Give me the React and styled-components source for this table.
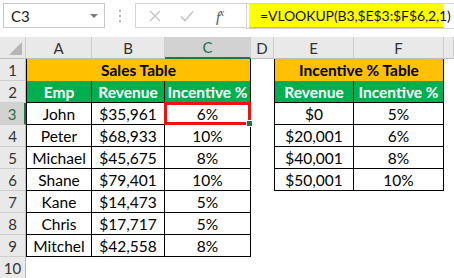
import React from "react";
import styled, { createGlobalStyle, css } from "styled-components";

const GlobalStyle = createGlobalStyle`
  * { box-sizing: border-box; }
  body {
    margin: 0;
    background: #fff;
    font-family: Lato, "Open Sans", "Liberation Sans", sans-serif;
  }
`;

const Sheet = styled.div`
  width: 454px;
  height: 278px;
  overflow: hidden;
  background: #fff;
`;

const FormulaBar = styled.div`
  height: 37px;
  display: flex;
  align-items: flex-start;
  padding: 3px 0 0 3px;
`;

const NameBox = styled.div`
  width: 102px;
  height: 25px;
  border: 1px solid #c6c6c6;
  display: flex;
  align-items: center;
  justify-content: space-between;
  padding: 0 6px 0 7px;
  font-size: 15px;
  color: #222;
`;

const Caret = styled.span`
  width: 0;
  height: 0;
  border-left: 4px solid transparent;
  border-right: 4px solid transparent;
  border-top: 4px solid #7a7a7a;
`;

const Dots = styled.div`
  width: 30px;
  height: 25px;
  display: flex;
  flex-direction: column;
  align-items: center;
  justify-content: center;
  gap: 3px;
  span {
    width: 2px;
    height: 2px;
    background: #b0b0b0;
  }
`;

const IconBox = styled.div`
  width: 111px;
  height: 25px;
  border: 1px solid #d4d4d4;
  border-right: none;
  display: flex;
  align-items: center;
  padding-left: 12px;
  gap: 17px;
`;

const Fx = styled.span`
  font-family: "Liberation Serif", serif;
  font-style: italic;
  font-size: 15px;
  color: #555;
  margin-left: 4px;
  letter-spacing: -1px;
  sup {
    font-size: 11px;
  }
`;

const FormulaBox = styled.div`
  flex: 1;
  height: 26px;
  border: 1px solid #d4d4d4;
  border-right: none;
  padding: 0 0 0 2px;
  display: flex;
`;

const Highlight = styled.div`
  width: 195px;
  background: #ffff00;
  border-bottom: 1px solid #c9c92a;
  display: flex;
  align-items: center;
  padding-left: 11px;
  font-size: 14px;
  letter-spacing: -0.1px;
  color: #111;
  white-space: nowrap;
`;

const Grid = styled.div`
  display: grid;
  grid-template-columns: 26px 66px 73px 86px 23px 80px 90px 10px;
  grid-auto-rows: 22px;
`;

const ColHead = styled.div`
  background: ${(p) => (p.$active ? "#d2d2d2" : "#e9e9e9")};
  border-right: 1px solid #cdcdcd;
  border-bottom: ${(p) => (p.$active ? "2px solid #217346" : "1px solid #bdbdbd")};
  display: flex;
  align-items: center;
  justify-content: center;
  font-size: 15px;
  color: ${(p) => (p.$active ? "#217346" : "#333")};
`;

const Corner = styled(ColHead)`
  position: relative;
  &::after {
    content: "";
    position: absolute;
    right: 3px;
    bottom: 3px;
    border-left: 13px solid transparent;
    border-bottom: 13px solid #b5b5b5;
  }
`;

const RowHead = styled.div`
  background: ${(p) => (p.$active ? "#d2d2d2" : "#e9e9e9")};
  border-bottom: 1px solid #cdcdcd;
  border-right: ${(p) => (p.$active ? "2px solid #217346" : "1px solid #bdbdbd")};
  display: flex;
  align-items: center;
  justify-content: center;
  font-size: 15px;
  color: ${(p) => (p.$active ? "#217346" : "#333")};
`;

const fills = {
  title: "#ffc000",
  head: "#00b050",
  data: "#fff",
  blank: "#fff",
};

const Cell = styled.div`
  position: relative;
  grid-column: ${(p) => p.$span || "auto"};
  background: ${(p) => fills[p.$kind]};
  display: flex;
  align-items: center;
  justify-content: center;
  font-size: 15.5px;
  white-space: nowrap;
  color: ${(p) => (p.$kind === "head" ? "#fff" : "#000")};
  font-weight: ${(p) => (p.$kind === "title" || p.$kind === "head" ? 700 : 400)};
  ${(p) =>
    p.$kind !== "blank" &&
    css`
      border-right: 1px solid #000;
      border-bottom: ${p.$kind === "title" ? "none" : "1px solid #000"};
      ${p.$first && "border-left: 1px solid #000;"}
    `}
  ${(p) =>
    p.$selected &&
    css`
      &::after {
        content: "";
        position: absolute;
        left: -1px;
        top: -1px;
        right: -1px;
        bottom: -1px;
        border: 3px solid #ee1111;
      }
      &::before {
        content: "";
        position: absolute;
        right: -3px;
        bottom: -3px;
        width: 5px;
        height: 5px;
        background: #217346;
        border: 1px solid #fff;
        z-index: 2;
      }
    `}
`;

const CloseIcon = () => (
  <svg width="14" height="14" viewBox="0 0 14 14">
    <path d="M2 2 L12 12 M12 2 L2 12" stroke="#c4c4c4" strokeWidth="1.4" fill="none" />
  </svg>
);

const CheckIcon = () => (
  <svg width="16" height="14" viewBox="0 0 16 14">
    <path d="M2 7.5 L6 11.5 L14 2.5" stroke="#c4c4c4" strokeWidth="1.6" fill="none" />
  </svg>
);

const sales = [
  ["John", "$35,961", "6%"],
  ["Peter", "$68,933", "10%"],
  ["Michael", "$45,675", "8%"],
  ["Shane", "$79,401", "10%"],
  ["Kane", "$14,473", "5%"],
  ["Chris", "$17,717", "5%"],
  ["Mitchel", "$42,558", "8%"],
];

const incentives = [
  ["$0", "5%"],
  ["$20,001", "6%"],
  ["$40,001", "8%"],
  ["$50,001", "10%"],
];

export default function App() {
  const rows = [];

  // row 1: titles
  rows.push(
    <RowHead key="r1">1</RowHead>,
    <Cell key="a1" $kind="title" $span="span 3" $first>Sales Table</Cell>,
    <Cell key="d1" $kind="blank" />,
    <Cell key="e1" $kind="title" $span="span 2" $first>Incentive % Table</Cell>,
    <Cell key="g1" $kind="blank" />
  );

  // row 2: headings
  rows.push(
    <RowHead key="r2">2</RowHead>,
    <Cell key="a2" $kind="head" $first>Emp</Cell>,
    <Cell key="b2" $kind="head">Revenue</Cell>,
    <Cell key="c2" $kind="head">Incentive %</Cell>,
    <Cell key="d2" $kind="blank" />,
    <Cell key="e2" $kind="head" $first>Revenue</Cell>,
    <Cell key="f2" $kind="head">Incentive %</Cell>,
    <Cell key="g2" $kind="blank" />
  );

  sales.forEach(([emp, rev, pct], i) => {
    const n = i + 3;
    const inc = incentives[i];
    rows.push(
      <RowHead key={`r${n}`} $active={n === 3}>{n}</RowHead>,
      <Cell key={`a${n}`} $kind="data" $first>{emp}</Cell>,
      <Cell key={`b${n}`} $kind="data">{rev}</Cell>,
      <Cell key={`c${n}`} $kind="data" $selected={n === 3}>{pct}</Cell>,
      <Cell key={`d${n}`} $kind="blank" />
    );
    if (inc) {
      rows.push(
        <Cell key={`e${n}`} $kind="data" $first>{inc[0]}</Cell>,
        <Cell key={`f${n}`} $kind="data">{inc[1]}</Cell>
      );
    } else {
      rows.push(<Cell key={`e${n}`} $kind="blank" />, <Cell key={`f${n}`} $kind="blank" />);
    }
    rows.push(<Cell key={`g${n}`} $kind="blank" />);
  });

  rows.push(<RowHead key="r10">10</RowHead>);

  return (
    <>
      <GlobalStyle />
      <Sheet>
        <FormulaBar>
          <NameBox>
            C3
            <Caret />
          </NameBox>
          <Dots>
            <span />
            <span />
            <span />
          </Dots>
          <IconBox>
            <CloseIcon />
            <CheckIcon />
            <Fx>
              f<sup>x</sup>
            </Fx>
          </IconBox>
          <FormulaBox>
            <Highlight>=VLOOKUP(B3,$E$3:$F$6,2,1)</Highlight>
          </FormulaBox>
        </FormulaBar>
        <Grid>
          <Corner />
          {["A", "B", "C", "D", "E", "F", ""].map((c) => (
            <ColHead key={c || "x"} $active={c === "C"}>{c}</ColHead>
          ))}
          {rows}
        </Grid>
      </Sheet>
    </>
  );
}
